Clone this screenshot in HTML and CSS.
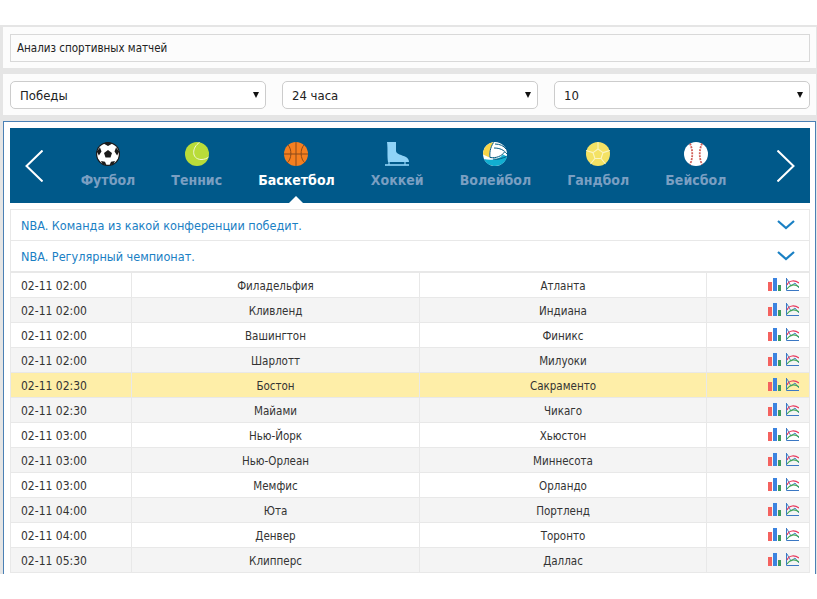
FILE: index.html
```html
<!DOCTYPE html>
<html lang="ru">
<head>
<meta charset="utf-8">
<title>Анализ спортивных матчей</title>
<link rel="stylesheet" href="styles.css">
</head>
<body>
<svg class="defs" width="0" height="0">
  <symbol id="bars" viewBox="0 0 13 13">
    <rect x="0" y="4" width="4" height="9" fill="#f4625f"/>
    <rect x="5" y="0" width="4" height="13" fill="#3b83e0"/>
    <rect x="10" y="7" width="3" height="6" fill="#3f9a5c"/>
  </symbol>
  <symbol id="lines" viewBox="0 0 13 13">
    <path d="M.5 0V12.500H13" fill="none" stroke="#3b78c4"/>
    <path d="M1 1 5 8 9 5 13 10" fill="none" stroke="#3b78c4" stroke-width=".9"/>
    <path d="M1 7C3 2 9 2 13 5" fill="none" stroke="#e8365a" stroke-width="1.200"/>
    <path d="M1 11C5 6 9 6 13 9" fill="none" stroke="#3fa653" stroke-width="1.200"/>
  </symbol>
</svg>
<div class="page">
  <section class="band"><div class="title">Анализ спортивных матчей</div></section>
  <section class="band filters">
    <div class="select">Победы</div>
    <div class="select">24 часа</div>
    <div class="select">10</div>
  </section>
  <main class="panel">
    <nav class="sports">
      <svg class="arrow" width="18" height="32" viewBox="0 0 18 32"><path d="M17.500 .5 1.500 16 17.500 31.500" fill="none" stroke="#fff" stroke-width="2"/></svg>
      <ul class="sport-list">
        <li class="sport">
          <svg width="24" height="24" viewBox="0 0 24 24"><circle cx="12" cy="12" r="12" fill="#1b1b1b"/><circle cx="12" cy="12" r="10.800" fill="#fff"/><path d="M12 8l4 2.900-1.500 4.600H9.500L8 10.900zM12 0l4.500 1.500L12 4 7.500 1.500zM.8 9.500l3.200-4 1.500 4-2.600 4zM23.200 9.500l-3.200-4-1.500 4 2.600 4zM5 19l4 .7 1.500 3.500-4-1zM19 19l-4 .7-1.500 3.500 4-1z" fill="#1b1b1b"/></svg>
          <span>Футбол</span>
        </li>
        <li class="sport">
          <svg width="24" height="24" viewBox="0 0 24 24"><circle cx="12" cy="12" r="12" fill="#b9dc39"/><path d="M14.500 .5C7 5 6 17 16 17.500C19 17.600 22 16.500 23.500 15" fill="none" stroke="#f4f8d8" stroke-width="1"/></svg>
          <span>Теннис</span>
        </li>
        <li class="sport active">
          <svg width="24" height="24" viewBox="0 0 24 24"><circle cx="12" cy="12" r="12" fill="#f47f20"/><path d="M12 0V24M0 12H24M4 3C8 7 8 17 3 21M20 3C16 7 16 17 21 21" fill="none" stroke="#8a4a1a" stroke-width="1"/></svg>
          <span>Баскетбол</span>
        </li>
        <li class="sport">
          <svg width="24" height="24" viewBox="0 0 24 24"><path d="M2 0H11V9C11 12 17 13 21 15C23 16 24 18 24 20H3C2 13 3 8 2 0Z" fill="#8fd3f7"/><path d="M0 23H24" stroke="#8fd3f7" stroke-width="1.600" fill="none"/><path d="M4 20V23M20 20V23" stroke="#8fd3f7" stroke-width="1.200"/></svg>
          <span>Хоккей</span>
        </li>
        <li class="sport">
          <svg width="24" height="24" viewBox="0 0 24 24"><circle cx="12" cy="12" r="12" fill="#fff"/><path d="M9.500 .4C3.500 1.500 0 6.500 0 12.500L6.500 15.500C6 10 7 5 10.500 .2Z" fill="#f7d548"/><path d="M1 17C3 22 8 24 12 24C18 24 23 20 24 14.500L20 12.500C17 17 8 19 1 17Z" fill="#12aed1"/><path d="M7 15.500C13 16.500 19 14 21.500 10M10.500 .5C7 6 6.500 11 7 15.500M10 17C15 18 20 16 23.500 14.500" fill="none" stroke="#00587f" stroke-width="1"/><path d="M11 6C17 6 21 8 24 12M12 2C17 2 21 4 23 7" fill="none" stroke="#00587f" stroke-width="1"/></svg>
          <span>Волейбол</span>
        </li>
        <li class="sport">
          <svg width="24" height="24" viewBox="0 0 24 24"><circle cx="12" cy="12" r="12" fill="#f4e264"/><path d="M12 7l5 3.600-1.900 5.900H8.900L7 10.600zM12 7V0M17 10.600 24 8.500M15.100 16.500 19.500 22M8.900 16.500 4.500 22M7 10.600 0 8.500" fill="none" stroke="#fbf5c0" stroke-width="1.100"/></svg>
          <span>Гандбол</span>
        </li>
        <li class="sport">
          <svg width="24" height="24" viewBox="0 0 24 24"><circle cx="12" cy="12" r="12" fill="#fff"/><path d="M6 1.500C9 8 9 16 6 22.500M18 1.500C15 8 15 16 18 22.500" fill="none" stroke="#d0605a" stroke-width="1.800" stroke-dasharray="2 1"/></svg>
          <span>Бейсбол</span>
        </li>
      </ul>
      <svg class="arrow" width="18" height="32" viewBox="0 0 18 32"><path d="M.5 .5 16.500 16 .5 31.500" fill="none" stroke="#fff" stroke-width="2"/></svg>
    </nav>
    <div class="leagues">
      <div class="league"><span>NBA. Команда из какой конференции победит.</span><svg width="18" height="10" viewBox="0 0 18 10"><path d="M1 1 9 8 17 1" fill="none" stroke="#1a80c4" stroke-width="2.200"/></svg></div>
      <div class="league"><span>NBA. Регулярный чемпионат.</span><svg width="18" height="10" viewBox="0 0 18 10"><path d="M1 1 9 8 17 1" fill="none" stroke="#1a80c4" stroke-width="2.200"/></svg></div>
    </div>
    <table class="matches">
      <tbody>
        <tr><td>02-11 02:00</td><td>Филадельфия</td><td>Атланта</td><td><svg class="ico"><use href="#bars"/></svg><svg class="ico"><use href="#lines"/></svg></td></tr>
        <tr><td>02-11 02:00</td><td>Кливленд</td><td>Индиана</td><td><svg class="ico"><use href="#bars"/></svg><svg class="ico"><use href="#lines"/></svg></td></tr>
        <tr><td>02-11 02:00</td><td>Вашингтон</td><td>Финикс</td><td><svg class="ico"><use href="#bars"/></svg><svg class="ico"><use href="#lines"/></svg></td></tr>
        <tr><td>02-11 02:00</td><td>Шарлотт</td><td>Милуоки</td><td><svg class="ico"><use href="#bars"/></svg><svg class="ico"><use href="#lines"/></svg></td></tr>
        <tr class="hl"><td>02-11 02:30</td><td>Бостон</td><td>Сакраменто</td><td><svg class="ico"><use href="#bars"/></svg><svg class="ico"><use href="#lines"/></svg></td></tr>
        <tr><td>02-11 02:30</td><td>Майами</td><td>Чикаго</td><td><svg class="ico"><use href="#bars"/></svg><svg class="ico"><use href="#lines"/></svg></td></tr>
        <tr><td>02-11 03:00</td><td>Нью-Йорк</td><td>Хьюстон</td><td><svg class="ico"><use href="#bars"/></svg><svg class="ico"><use href="#lines"/></svg></td></tr>
        <tr><td>02-11 03:00</td><td>Нью-Орлеан</td><td>Миннесота</td><td><svg class="ico"><use href="#bars"/></svg><svg class="ico"><use href="#lines"/></svg></td></tr>
        <tr><td>02-11 03:00</td><td>Мемфис</td><td>Орландо</td><td><svg class="ico"><use href="#bars"/></svg><svg class="ico"><use href="#lines"/></svg></td></tr>
        <tr><td>02-11 04:00</td><td>Юта</td><td>Портленд</td><td><svg class="ico"><use href="#bars"/></svg><svg class="ico"><use href="#lines"/></svg></td></tr>
        <tr><td>02-11 04:00</td><td>Денвер</td><td>Торонто</td><td><svg class="ico"><use href="#bars"/></svg><svg class="ico"><use href="#lines"/></svg></td></tr>
        <tr><td>02-11 05:30</td><td>Клипперс</td><td>Даллас</td><td><svg class="ico"><use href="#bars"/></svg><svg class="ico"><use href="#lines"/></svg></td></tr>
      </tbody>
    </table>
  </main>
</div>
</body>
</html>
```
FILE: styles.css
```css
* { box-sizing: border-box; }
html, body { margin: 0; background: #fff; }
body { font-family: "DejaVu Sans Condensed", "DejaVu Sans", sans-serif; font-stretch: condensed; font-size: 12px; color: #333; }
.defs { position: absolute; }
.page { height: 549px; overflow: hidden; margin-top: 25px; background: #e5e5e5; padding: 2px 1px 0 3px; display: flex; flex-direction: column; gap: 6px; width: 817px; }
.band { height: 41px; background: #fcfcfc; padding: 7px 6px 0 7px; flex: none; }
.title { height: 28px; border: 1px solid #d9d9d9; padding-left: 6px; line-height: 26px; font-size: 11.5px; color: #222; }
.filters { display: flex; gap: 16px; }
.select { flex: 1; height: 28px; border: 1px solid #ccc; border-radius: 5px; background: #fff; padding-left: 9px; line-height: 28px; font-size: 13px; color: #222; position: relative; }
.select::after { content: ""; position: absolute; right: 6px; top: 10px; border: 3px solid transparent; border-top: 6px solid #111; border-bottom: 0; }
.panel { flex: 1; min-height: 0; background: #fff; border: 1px solid #4a80b5; border-bottom: 0; padding: 6px 5px 0 6px; }
.sports { height: 75px; background: #00598a; display: flex; align-items: center; padding: 0 15px; position: relative; }
.arrow { flex: none; margin-top: 1px; }
.sport-list { list-style: none; margin: 0; padding: 1px 13px 0 0; flex: 1; display: flex; justify-content: center; gap: 36px; }
.sport { display: flex; flex-direction: column; align-items: center; gap: 5px; font-weight: 700; font-size: 14px; color: #7a9fc2; position: relative; }
.sport span { line-height: 19px; }
.active { color: #fff; }
.active::after { content: ""; position: absolute; left: 50%; margin-left: -8px; bottom: -14px; border: 8px solid transparent; border-bottom-color: #fff; border-top: 0; }
.leagues { margin-top: 6px; border: 1px solid #e8e8e8; border-bottom: 0; }
.league { height: 31px; display: flex; align-items: center; justify-content: space-between; padding: 0 14px 0 10px; color: #1a80c4; font-size: 12.55px; border-bottom: 1px solid #e8e8e8; }
.matches { width: 100%; border-collapse: collapse; table-layout: fixed; border-top: 1px solid #e8e8e8; }
.matches td { height: 25px; border: 1px solid #e8e8e8; text-align: center; padding: 2px 0 0; font-size: 11.5px; }
.matches td:first-child { width: 121px; text-align: left; padding-left: 10px; font-size: 12px; }
.matches td:nth-child(2) { width: 288px; }
.matches td:nth-child(3) { width: 287px; }
.matches td:last-child { text-align: right; padding: 0 10px 0 0; line-height: 0; }
.matches tr:nth-child(even) { background: #f4f4f4; }
.matches tr.hl { background: #feeea8; }
.ico { width: 13px; height: 13px; display: inline-block; vertical-align: middle; margin: -2px 0 0 5px; }
```
